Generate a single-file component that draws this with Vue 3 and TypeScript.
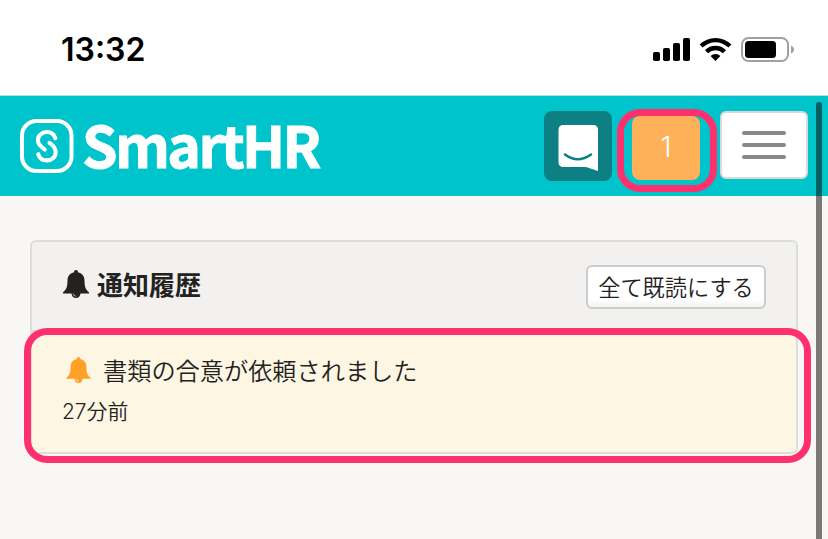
<script setup lang="ts">
import { ref } from 'vue'

interface Notice {
  id: number
  title: string
  time: string
}

const unread = ref(1)
const notices = ref<Notice[]>([
  { id: 1, title: '書類の合意が依頼されました', time: '27分前' },
])
</script>

<template>
  <div class="screen">
    <div class="status">
      <span class="clock">13:32</span>
      <svg class="signals" width="142" height="26" viewBox="0 0 142 26">
        <rect x="0" y="15" width="7" height="9" rx="1.800" />
        <rect x="10" y="11" width="7" height="13" rx="1.800" />
        <rect x="20" y="6" width="7" height="18" rx="1.800" />
        <rect x="30" y="1" width="7" height="23" rx="1.800" />
        <path d="M46.600 7.600a22.600 22.600 0 0 1 31.800 0l-3 3a18.400 18.400 0 0 0-25.800 0zM52 13.200a14.900 14.900 0 0 1 21 0l-3.100 3.100a10.600 10.600 0 0 0-14.800 0zM57.600 19a6.900 6.900 0 0 1 9.800 0l-4.900 5z" />
        <rect x="89" y="1" width="46" height="23" rx="6.500" fill="none" stroke="#a0a0a0" stroke-width="2" />
        <rect x="92" y="4" width="31" height="17" rx="3.500" />
        <path d="M138 8.500c4 1.500 4 6.500 0 8z" fill="#a0a0a0" />
      </svg>
    </div>

    <header class="bar">
      <div class="brand">
        <svg width="54" height="54" viewBox="0 0 54 54" fill="none" stroke="#fff" stroke-linecap="round">
          <rect x="2" y="2" width="49.500" height="50" rx="14.500" stroke-width="4" />
          <path d="M35.300 19.200C34.300 15.500 31 13 26.700 13c-5 0-8.800 3.700-8.800 8.200 0 3.600 2 5.300 6.800 9.300M18.300 35.200c1 3.700 4.300 6.200 8.600 6.200 5 0 8.800-3.700 8.800-8.200 0-3.600-1.600-6.200-6.200-9.300" stroke-width="4.100" />
        </svg>
        <span class="name">SmartHR</span>
      </div>
      <div class="actions">
        <button class="chat" aria-label="chat">
          <svg width="40" height="47" viewBox="0 0 40 47">
            <path d="M5 0h30.500a4.500 4.500 0 0 1 4.500 4.500V46L28 42H5a4.500 4.500 0 0 1-4.500-4.500v-33A4.500 4.500 0 0 1 5 0z" fill="#fff" />
            <path d="M7 29.500q12.700 9.500 26 0" fill="none" stroke="#0d8084" stroke-width="2.600" stroke-linecap="round" />
          </svg>
        </button>
        <button class="count">{{ unread }}<span class="ring"></span></button>
        <button class="menu" aria-label="menu"><i></i><i></i><i></i></button>
      </div>
    </header>

    <main class="content">
      <section class="panel">
        <div class="panel-head">
          <svg class="bell" width="26" height="28" viewBox="0 0 26 28">
            <path d="M13 0c-1.300 0-2 .8-1.900 2.200C7 3.100 4.500 6.200 4.500 10.300c0 6.200-.9 9.300-4.500 12v1.100h8.500C8.900 26.400 10.600 28 13 28s4.100-1.600 4.500-4.600H26v-1.100c-3.600-2.700-4.500-5.800-4.500-12 0-4.100-2.500-7.200-6.600-8.100C15 .8 14.300 0 13 0z" fill="currentColor" />
            <path d="M10.200 23.600q.3 2.500 2.800 2.700" fill="none" stroke="#f2f1ef" stroke-width=".7" />
          </svg>
          <h1>通知履歴</h1>
          <button class="read-all">全て既読にする</button>
        </div>
        <div v-for="n in notices" :key="n.id" class="notice">
          <div class="line">
            <svg class="bell" width="25" height="26" viewBox="0 0 26 28">
              <path d="M13 0c-1.300 0-2 .8-1.900 2.200C7 3.100 4.500 6.200 4.500 10.300c0 6.200-.9 9.300-4.500 12v1.100h8.500C8.900 26.400 10.600 28 13 28s4.100-1.600 4.500-4.600H26v-1.100c-3.600-2.700-4.500-5.800-4.500-12 0-4.100-2.500-7.200-6.600-8.100C15 .8 14.300 0 13 0z" fill="currentColor" />
              <path d="M10.200 23.600q.3 2.500 2.800 2.700" fill="none" stroke="#fdf6e3" stroke-width=".7" />
            </svg>
            <span class="title">{{ n.title }}</span>
          </div>
          <div class="time">{{ n.time }}</div>
          <span class="ring"></span>
        </div>
      </section>
    </main>
    <div class="scroll"></div>
  </div>
</template>

<style>
body { margin: 0; background: #f8f7f5; }
</style>

<style scoped>
* { box-sizing: border-box; }
.screen {
  position: relative;
  height: 539px;
  overflow: hidden;
  background: #f8f7f5;
  color: #23221e;
  font-family: "Noto Sans CJK JP", sans-serif;
  font-weight: 350;
}
button { font: inherit; color: inherit; padding: 0; border: 0; }
.status {
  height: 96px;
  padding: 0 33px 0 61px;
  background: #fff;
  border-bottom: 1px solid #bcdcdc;
  display: flex;
  justify-content: space-between;
}
.clock {
  margin-top: 30px;
  font: 600 32px/40px Inter, sans-serif;
  color: #000;
}
.signals { margin-top: 37px; }
.bar {
  height: 100px;
  padding: 15px 20px 0;
  background: #00c4cc;
  display: flex;
  justify-content: space-between;
}
.brand { display: flex; padding-top: 8px; color: #fff; }
.name {
  margin: -11px 0 0 8px;
  font-size: 57px;
  font-weight: 700;
  line-height: 70px;
  letter-spacing: -2.600px;
  -webkit-text-stroke: 1px #fff;
  white-space: nowrap;
}
.actions { display: flex; }
.chat {
  width: 68px;
  height: 70px;
  border-radius: 8px;
  background: #0d8084;
  display: flex;
  justify-content: center;
  padding-top: 14px;
}
.count {
  position: relative;
  width: 68px;
  height: 64px;
  margin: 5px 20px 0;
  border-radius: 8px;
  background: #ffb159;
  color: #fff;
  font: 350 28px/60px Inter, sans-serif;
  padding-bottom: 2px;
}
.ring {
  position: absolute;
  border: 7px solid #ff306e;
  border-radius: 23px;
  pointer-events: none;
}
.count .ring { inset: -7px -17px -12px -15px; }
.menu {
  width: 88px;
  height: 68px;
  border: 2px solid #d9d9d7;
  border-radius: 6px;
  background: #fff;
  display: flex;
  flex-direction: column;
  align-items: center;
  justify-content: center;
  gap: 8px;
}
.menu i { width: 44px; height: 4px; border-radius: 2px; background: #888; }
.content { padding: 44px 30px; }
.panel { height: 214px; border: 2px solid #dddddb; border-radius: 6px; }
.panel-head {
  height: 90px;
  padding: 0 30px 4px 31px;
  background: #f2f1ef;
  border-bottom: 2px solid #dddddb;
  border-radius: 4px 4px 0 0;
  display: flex;
  align-items: center;
}
.bell { flex: none; }
h1 { margin: -1px auto 0 8px; font-size: 26px; line-height: 36px; font-weight: 700; }
.read-all {
  width: 180px;
  height: 44px;
  border: 2px solid #cccccb;
  border-radius: 6px;
  background: linear-gradient(#fff 80%, #f3f3f2);
  font-size: 22.200px;
  line-height: 36px;
  padding-bottom: 3px;
  white-space: nowrap;
  margin-top: 6px;
}
.notice {
  position: relative;
  height: 120px;
  padding: 20px 34px;
  background: #fdf6e3;
  border-radius: 0 0 4px 4px;
}
.notice .ring { inset: -4px -15px -11px -8px; }
.line { display: flex; align-items: center; height: 36px; }
.line .bell { color: #ffa127; }
.title { margin-left: 12px; font-size: 24.200px; line-height: 36px; white-space: nowrap; }
.time { margin: 9px 0 0 -4px; font: 350 20.900px/30px Inter, "Noto Sans CJK JP", sans-serif; }
.scroll {
  position: absolute;
  top: 102px;
  right: 6px;
  bottom: 0;
  width: 6px;
  border-radius: 3px 3px 0 0;
  background: rgba(0, 0, 0, .51);
}
</style>
